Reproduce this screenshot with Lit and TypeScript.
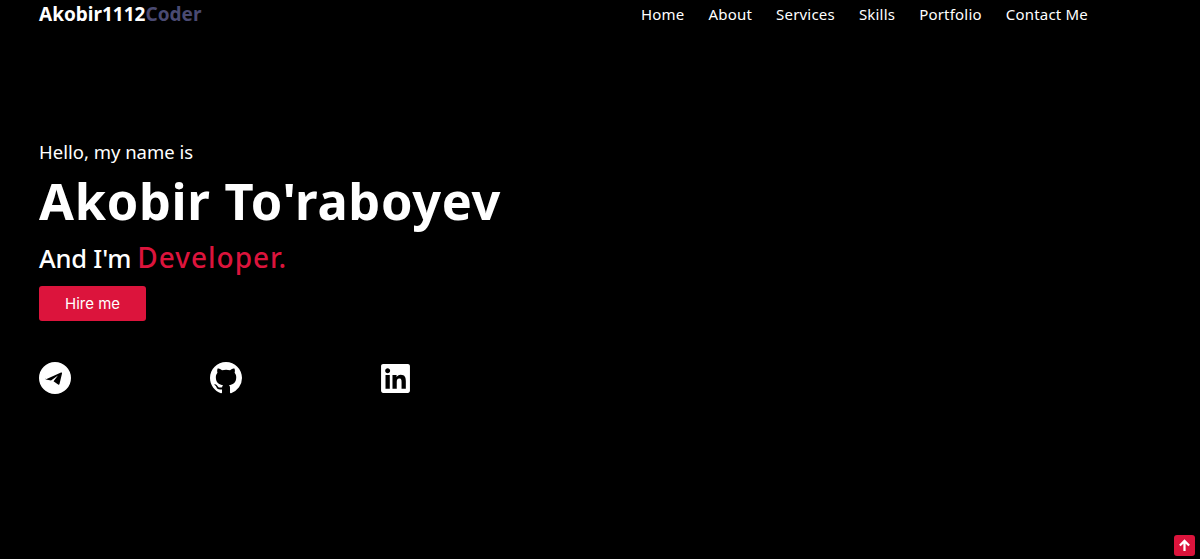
import { LitElement, html, css } from 'lit';
import { customElement } from 'lit/decorators.js';

const NAV_LINKS = ['Home', 'About', 'Services', 'Skills', 'Portfolio', 'Contact Me'];

@customElement('app-root')
export class AppRoot extends LitElement {
  static styles = css`
    :host {
      display: block;
      position: relative;
      height: 559px;
      overflow: hidden;
      background: #000;
      color: #fff;
      font-family: 'Noto Sans', 'Open Sans', sans-serif;
    }

    .header {
      display: flex;
      align-items: center;
      justify-content: space-between;
      height: 27px;
      padding: 0 112px 0 39px;
    }

    .logo {
      font-size: 19px;
      font-weight: 700;
    }

    .logo span {
      color: #4a4a72;
    }

    .nav {
      display: flex;
      gap: 24px;
    }

    .nav a {
      color: #fff;
      font-size: 15px;
      letter-spacing: 0.2px;
    }

    .hero {
      display: flex;
      flex-direction: column;
      align-items: flex-start;
      padding: 109px 0 0 39px;
    }

    .hello {
      font-size: 18.5px;
      line-height: 31px;
    }

    .name {
      margin: 0;
      font-size: 50.5px;
      font-weight: 700;
      line-height: 68px;
      letter-spacing: 0.7px;
    }

    .role {
      display: flex;
      align-items: baseline;
      gap: 6px;
      margin-top: 1px;
      font-size: 25.5px;
      font-weight: 500;
      line-height: 42px;
      letter-spacing: -0.2px;
    }

    .role span {
      color: crimson;
      font-size: 28px;
      letter-spacing: 1px;
    }

    .hire {
      display: block;
      width: 107px;
      height: 35px;
      margin-top: 7px;
      padding: 0;
      border: none;
      border-radius: 3px;
      background: crimson;
      color: #fff;
      font-family: 'Inter', sans-serif;
      font-size: 15px;
    }

    .socials {
      display: grid;
      grid-template-columns: repeat(3, 171px);
      margin-top: 41px;
    }

    .socials svg {
      display: block;
      width: 32px;
      height: 32px;
      fill: #fff;
    }

    .socials .linkedin {
      width: 29px;
      height: 33px;
    }

    .to-top {
      position: absolute;
      right: 5px;
      bottom: 3px;
      display: flex;
      align-items: center;
      justify-content: center;
      width: 21px;
      height: 21px;
      border-radius: 3px;
      background: crimson;
    }

    .to-top svg {
      width: 13px;
      height: 13px;
      fill: none;
      stroke: #fff;
      stroke-width: 2.4;
    }
  `;

  render() {
    return html`
      <header class="header">
        <div class="logo">Akobir1112<span>Coder</span></div>
        <nav class="nav">
          ${NAV_LINKS.map((link) => html`<a>${link}</a>`)}
        </nav>
      </header>
      <section class="hero">
        <div class="hello">Hello, my name is</div>
        <h1 class="name">Akobir To'raboyev</h1>
        <div class="role">And I'm <span>Developer.</span></div>
        <button class="hire">Hire me</button>
        <div class="socials">
          <svg viewBox="0 0 32 32">
            <path fill-rule="evenodd" d="M16 0a16 16 0 1 0 0 32a16 16 0 0 0 0-32zM6.5 17.5L22 10.5c.7-.3 1.2.2 1 1L20.5 22c-.2.8-.8 1-1.4.6l-4.6-3.4 4.5-5.7-7 4.9-5.2-.9c-.9-.2-1-.6-.3-1z" />
          </svg>
          <svg viewBox="0 0 16 16">
            <path d="M8 0C3.58 0 0 3.58 0 8c0 3.54 2.29 6.53 5.47 7.59.4.07.55-.17.55-.38 0-.19-.01-.82-.01-1.49-2.01.37-2.53-.49-2.69-.94-.09-.23-.48-.94-.82-1.13-.28-.15-.68-.52-.01-.53.63-.01 1.08.58 1.23.82.72 1.21 1.87.87 2.33.66.07-.52.28-.87.51-1.07-1.78-.2-3.64-.89-3.64-3.95 0-.87.31-1.59.82-2.15-.08-.2-.36-1.02.08-2.12 0 0 .67-.21 2.2.82.64-.18 1.32-.27 2-.27.68 0 1.36.09 2 .27 1.53-1.04 2.2-.82 2.2-.82.44 1.1.16 1.92.08 2.12.51.56.82 1.27.82 2.15 0 3.07-1.87 3.75-3.65 3.95.29.25.54.73.54 1.48 0 1.07-.01 1.93-.01 2.2 0 .21.15.46.55.38A8.013 8.013 0 0 0 16 8c0-4.42-3.58-8-8-8z" />
          </svg>
          <svg class="linkedin" viewBox="0 0 448 512">
            <path d="M416 32H31.9C14.3 32 0 46.5 0 64.3v383.4C0 465.5 14.3 480 31.9 480H416c17.6 0 32-14.5 32-32.3V64.3c0-17.8-14.4-32.3-32-32.3zM135.4 416H69V202.2h66.5V416zm-33.2-243c-21.3 0-38.5-17.3-38.5-38.5S80.9 96 102.2 96c21.2 0 38.5 17.3 38.5 38.5 0 21.3-17.2 38.5-38.5 38.5zm282.1 243h-66.4V312c0-24.8-.5-56.7-34.5-56.7-34.6 0-39.9 27-39.9 54.9V416h-66.4V202.2h63.7v29.2h.9c8.9-16.8 30.6-34.5 62.9-34.5 67.2 0 79.7 44.3 79.7 101.9V416z" />
          </svg>
        </div>
      </section>
      <a class="to-top">
        <svg viewBox="0 0 14 14"><path d="M7 13V2M2 7l5-5 5 5" /></svg>
      </a>
    `;
  }
}
